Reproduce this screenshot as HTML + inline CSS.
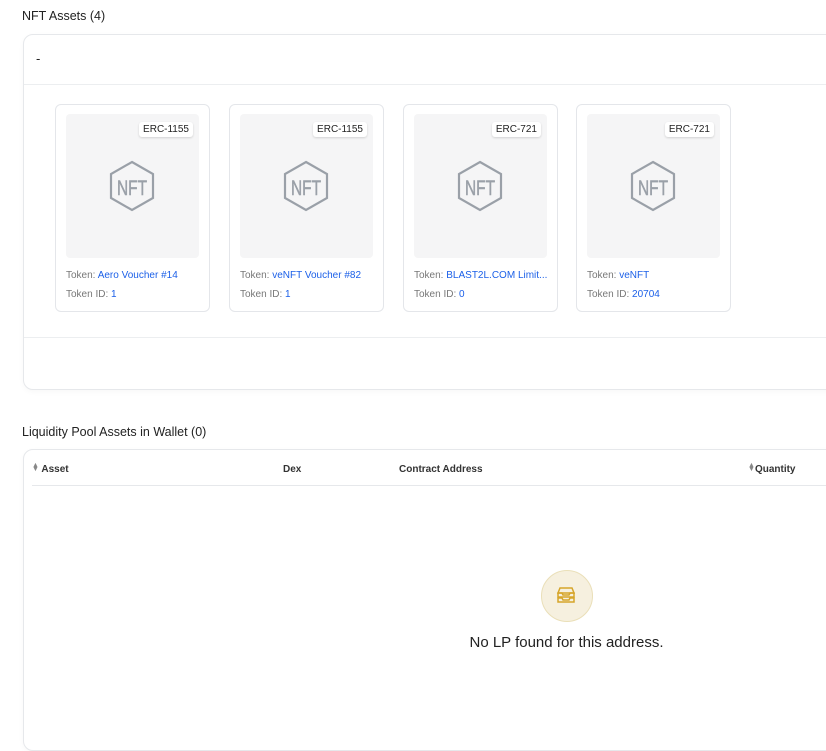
<!DOCTYPE html><html><head><style>
body{margin:0;width:826px;height:715px;overflow:hidden;background:#fff;font-family:"Liberation Sans",sans-serif;color:#222;position:relative}
.t{position:absolute;font-size:12.5px;color:#222}
.panel{position:absolute;left:23px;width:820px;border:1px solid #e6e8eb;border-radius:10px;background:#fff;box-shadow:0 2px 6px rgba(0,0,0,.03)}
.card{position:absolute;top:104px;width:153px;height:206px;border:1px solid #e4e6ea;border-radius:6px;background:#fff}
.img{position:absolute;left:10px;top:9px;width:133px;height:144px;background:#f5f5f6;border-radius:4px}
.tag{position:absolute;right:6px;top:8px;background:#fff;font-size:10px;padding:2px 4px;border-radius:3px;box-shadow:0 1px 2px rgba(0,0,0,.15);color:#222}
.img svg{position:absolute;left:43px;top:46px}
.l{position:absolute;left:10px;font-size:10px;color:#777}
.l span{color:#1c60e8}
.h{position:absolute;top:464px;font-size:10px;font-weight:bold;color:#333}
.s{display:inline-block;color:#888;font-size:7px;line-height:4px;vertical-align:1px}
</style></head><body>
<div class="t" style="left:22px;top:9px">NFT Assets (4)</div>
<div class="panel" style="top:34px;height:354px">
<div style="position:absolute;left:12px;top:16px;font-size:13px">-</div>
<div style="position:absolute;left:0;right:0;top:49px;border-top:1px solid #eceef0"></div>
<div style="position:absolute;left:0;right:0;top:302px;border-top:1px solid #eceef0"></div>
</div>
<div class="card" style="left:55px"><div class="img"><div class="tag">ERC-1155</div><svg width="46" height="52" viewBox="0 0 46 52"><polygon points="23,2 44,14 44,38 23,50 2,38 2,14" fill="none" stroke="#9aa0a8" stroke-width="2.2"/><text x="23" y="35" text-anchor="middle" font-family="Liberation Sans" font-size="21" fill="#9aa0a8" stroke="#9aa0a8" stroke-width="0.5" textLength="30" lengthAdjust="spacingAndGlyphs">NFT</text></svg></div><div class="l" style="top:165px">Token: <span>Aero Voucher #14</span></div><div class="l" style="top:184px">Token ID: <span>1</span></div></div>
<div class="card" style="left:229px"><div class="img"><div class="tag">ERC-1155</div><svg width="46" height="52" viewBox="0 0 46 52"><polygon points="23,2 44,14 44,38 23,50 2,38 2,14" fill="none" stroke="#9aa0a8" stroke-width="2.2"/><text x="23" y="35" text-anchor="middle" font-family="Liberation Sans" font-size="21" fill="#9aa0a8" stroke="#9aa0a8" stroke-width="0.5" textLength="30" lengthAdjust="spacingAndGlyphs">NFT</text></svg></div><div class="l" style="top:165px">Token: <span>veNFT Voucher #82</span></div><div class="l" style="top:184px">Token ID: <span>1</span></div></div>
<div class="card" style="left:403px"><div class="img"><div class="tag">ERC-721</div><svg width="46" height="52" viewBox="0 0 46 52"><polygon points="23,2 44,14 44,38 23,50 2,38 2,14" fill="none" stroke="#9aa0a8" stroke-width="2.2"/><text x="23" y="35" text-anchor="middle" font-family="Liberation Sans" font-size="21" fill="#9aa0a8" stroke="#9aa0a8" stroke-width="0.5" textLength="30" lengthAdjust="spacingAndGlyphs">NFT</text></svg></div><div class="l" style="top:165px">Token: <span>BLAST2L.COM Limit...</span></div><div class="l" style="top:184px">Token ID: <span>0</span></div></div>
<div class="card" style="left:576px"><div class="img"><div class="tag">ERC-721</div><svg width="46" height="52" viewBox="0 0 46 52"><polygon points="23,2 44,14 44,38 23,50 2,38 2,14" fill="none" stroke="#9aa0a8" stroke-width="2.2"/><text x="23" y="35" text-anchor="middle" font-family="Liberation Sans" font-size="21" fill="#9aa0a8" stroke="#9aa0a8" stroke-width="0.5" textLength="30" lengthAdjust="spacingAndGlyphs">NFT</text></svg></div><div class="l" style="top:165px">Token: <span>veNFT</span></div><div class="l" style="top:184px">Token ID: <span>20704</span></div></div>

<div class="t" style="left:22px;top:425px">Liquidity Pool Assets in Wallet (0)</div>
<div class="panel" style="top:449px;height:300px"></div>
<div class="h" style="left:32px"><span class="s">&#9650;<br>&#9660;</span> Asset</div>
<div class="h" style="left:283px">Dex</div>
<div class="h" style="left:399px">Contract Address</div>
<div class="h" style="left:748px"><span class="s">&#9650;<br>&#9660;</span>Quantity</div>
<div style="position:absolute;left:32px;right:0;top:485px;border-top:1px solid #e6e8eb"></div>
<div style="position:absolute;left:541px;top:570px;width:50px;height:50px;border-radius:50%;background:#f6f0df;border:1px solid #eadfb8"></div>
<svg style="position:absolute;left:556px;top:585px" width="20" height="20" viewBox="0 0 20 20" fill="none" stroke="#d6a52a" stroke-width="1.5"><path d="M4 3h12l2 5H2z"/><path d="M2 8h4l1 2h6l1-2h4v4H2z"/><path d="M2 13h4l1 2h6l1-2h4v4H2z"/></svg>
<div style="position:absolute;left:0;width:1133px;top:634px;text-align:center;font-size:15px;color:#222">No LP found for this address.</div>
</body></html>
